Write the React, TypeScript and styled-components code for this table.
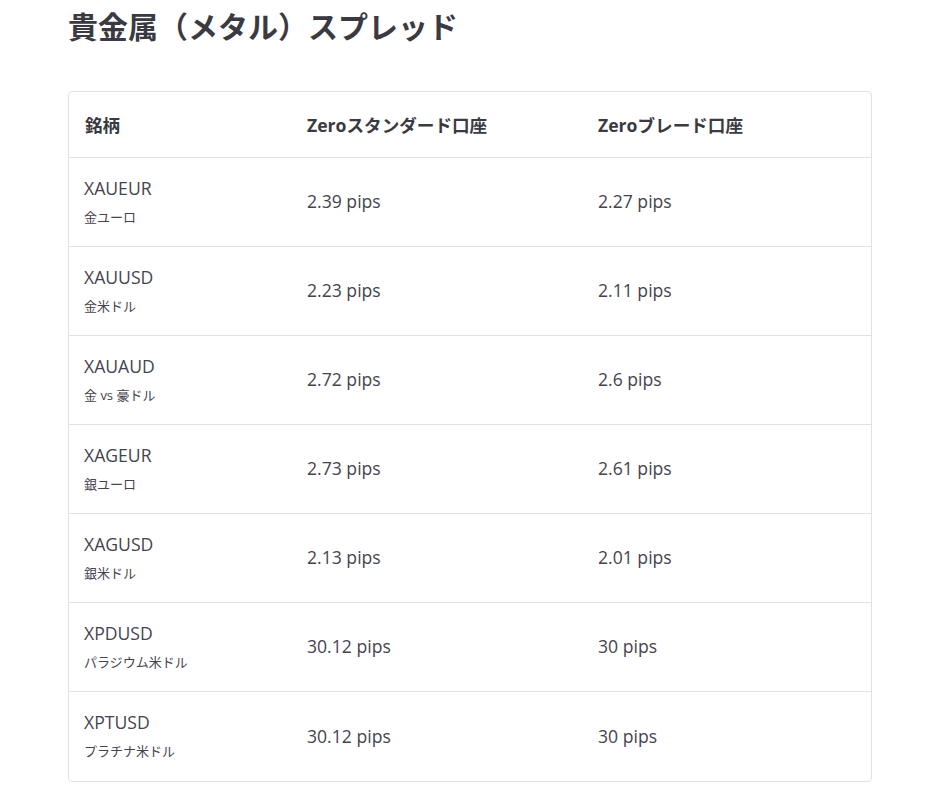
import React, { FC } from "react";
import styled, { createGlobalStyle } from "styled-components";

type Row = { symbol: string; name: string; standard: string; blade: string };

const rows: Row[] = [
  { symbol: "XAUEUR", name: "金ユーロ", standard: "2.39 pips", blade: "2.27 pips" },
  { symbol: "XAUUSD", name: "金米ドル", standard: "2.23 pips", blade: "2.11 pips" },
  { symbol: "XAUAUD", name: "金 vs 豪ドル", standard: "2.72 pips", blade: "2.6 pips" },
  { symbol: "XAGEUR", name: "銀ユーロ", standard: "2.73 pips", blade: "2.61 pips" },
  { symbol: "XAGUSD", name: "銀米ドル", standard: "2.13 pips", blade: "2.01 pips" },
  { symbol: "XPDUSD", name: "パラジウム米ドル", standard: "30.12 pips", blade: "30 pips" },
  { symbol: "XPTUSD", name: "プラチナ米ドル", standard: "30.12 pips", blade: "30 pips" },
];

const App: FC = () => {
  return (
    <>
      <GlobalStyle />
      <Page>
        <Title>貴金属（メタル）スプレッド</Title>
        <Table>
          <HeadRow>
            <HeadCell>銘柄</HeadCell>
            <HeadCell>Zeroスタンダード口座</HeadCell>
            <HeadCell>Zeroブレード口座</HeadCell>
          </HeadRow>
          {rows.map((r, i) => (
            <BodyRow key={r.symbol} last={i === rows.length - 1}>
              <Cell>
                <Symbol>{r.symbol}</Symbol>
                <SubName>{r.name}</SubName>
              </Cell>
              <Cell>{r.standard}</Cell>
              <Cell>{r.blade}</Cell>
            </BodyRow>
          ))}
        </Table>
      </Page>
    </>
  );
};

const GlobalStyle = createGlobalStyle`
  body {
    margin: 0;
    background: #fff;
    color: #3d3d45;
    font-family: "Open Sans", "Noto Sans CJK JP", sans-serif;
  }
`;

const Page = styled.div`
  padding: 6px 0 0 68px;
`;

const Title = styled.h1`
  margin: 0 0 43px;
  font-size: 30px;
  line-height: 42px;
  font-weight: 700;
  color: #3a3a42;
`;

const Table = styled.div`
  width: 804px;
  border: 1px solid #e2e2e2;
  border-radius: 4px;
  box-sizing: border-box;
`;

const HeadRow = styled.div`
  display: grid;
  grid-template-columns: 222px 291px 1fr;
  height: 66px;
  border-bottom: 1px solid #e2e2e2;
  box-sizing: border-box;
`;

const HeadCell = styled.div`
  display: flex;
  align-items: center;
  padding: 0 15px 0 16px;
  font-size: 17.6px;
  font-weight: 700;
  color: #3a3a42;
`;

const BodyRow = styled.div<{ last?: boolean }>`
  display: grid;
  grid-template-columns: 222px 291px 1fr;
  height: 89px;
  border-bottom: ${(p) => (p.last ? "none" : "1px solid #e2e2e2")};
  box-sizing: border-box;
`;

const Cell = styled.div`
  display: flex;
  flex-direction: column;
  justify-content: center;
  padding: 0 15px 2px 16px;
  font-size: 17.6px;
  color: #44444e;
`;

const Symbol = styled.div`
  line-height: 26px;
  margin-left: -1px;
`;

const SubName = styled.div`
  margin-top: 5px;
  font-size: 13px;
  line-height: 22px;
  margin-left: -1px;
`;

export default App;
